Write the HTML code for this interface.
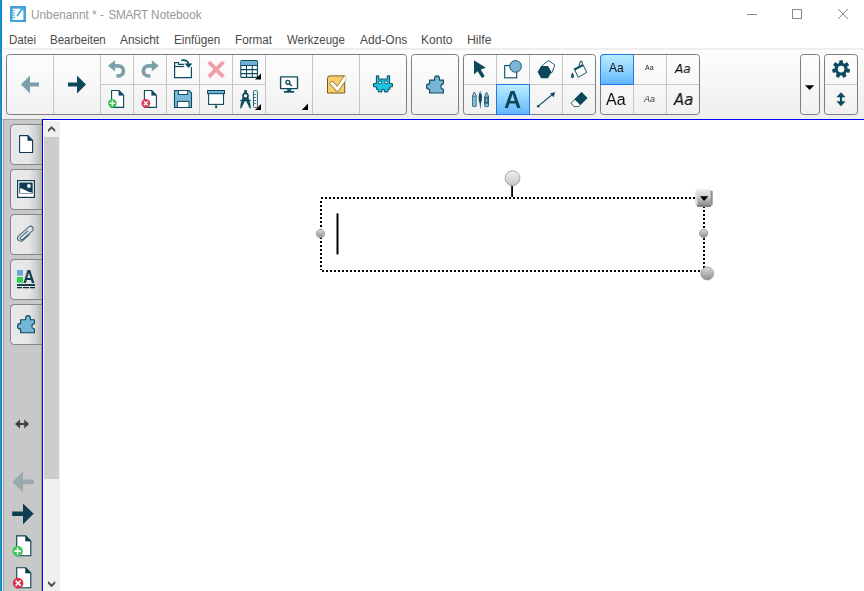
<!DOCTYPE html>
<html lang="de">
<head>
<meta charset="utf-8">
<title>Unbenannt * - SMART Notebook</title>
<style>
html,body{margin:0;padding:0;}
body{width:864px;height:591px;overflow:hidden;background:#fff;position:relative;font-family:"Liberation Sans",sans-serif;font-size:12px;color:#333;}
.abs{position:absolute;}
#lb{left:0;top:0;width:2px;height:591px;background:linear-gradient(90deg,#0099e2 0,#0099e2 50%,#1c7bb0 50%,#1c7bb0 100%);}
#title{left:30.7px;top:7px;transform-origin:0 50%;transform:scaleX(0.984);font-size:12px;color:#999;white-space:nowrap;line-height:16px;}
.mi{position:absolute;top:32px;line-height:16px;font-size:12px;color:#4a4a4a;white-space:nowrap;transform-origin:0 50%;}
#tb{left:3px;top:48px;width:861px;height:71px;background:linear-gradient(#fdfdfd,#eeeeee);border-top:2px solid #efefef;box-sizing:border-box;}
.grp{position:absolute;top:54px;height:61px;box-sizing:border-box;border:1px solid #7e7e7e;border-radius:3.5px;background:linear-gradient(#fdfdfd,#f1f1f1);overflow:hidden;}
.vd{position:absolute;top:0;width:1px;height:59px;background:#c6c6c6;}
.hd{position:absolute;top:29px;height:1px;background:#c6c6c6;}
.sel{position:absolute;box-sizing:border-box;border:1px solid #2478e3;background:linear-gradient(#b9ecff,#90d3ff 50%,#62b7fd);}
#side{left:2px;top:119px;width:40px;height:472px;background:#c8c8c8;border-top:1px solid #a2a2a2;border-left:1px solid #f2f0ef;border-right:1px solid #a0a0a0;box-sizing:border-box;box-shadow:inset 1px 0 0 #a3a3a3;}
.tab{position:absolute;left:10px;width:33px;height:41px;box-sizing:border-box;border:1px solid #858585;border-right:none;border-radius:4.5px 0 0 4.5px;background:linear-gradient(90deg,#e9e9e9 0%,#e6e6e6 55%,#cfcfcf 80%,#adadad 100%);}
#bt{left:42px;top:119px;width:822px;height:1px;background:#0000ff;}
#bl{left:42px;top:119px;width:1px;height:472px;background:#0000ff;}
#sb{left:44px;top:121px;width:16px;height:470px;background:#f0f0f0;}
#th{left:44px;top:137px;width:15px;height:342px;background:#cdcdcd;}
svg{position:absolute;overflow:visible;}
.fs{white-space:nowrap;transform-origin:0 50%;will-change:transform;}
#bigA,#sideA{will-change:transform;}
</style>
</head>
<body>
<div id="lb" class="abs"></div>
<div id="title" class="abs">Unbenannt * - <span style="margin-left:1.3px;letter-spacing:-0.35px">SMART</span> Notebook</div>
<span class="mi" style="left:9px;transform:scaleX(0.9637)">Datei</span>
<span class="mi" style="left:50.3px;transform:scaleX(0.9596)">Bearbeiten</span>
<span class="mi" style="left:120.3px;transform:scaleX(0.9960)">Ansicht</span>
<span class="mi" style="left:174.4px;transform:scaleX(0.9752)">Einfügen</span>
<span class="mi" style="left:235.4px;transform:scaleX(0.9759)">Format</span>
<span class="mi" style="left:287.2px;transform:scaleX(0.9556)">Werkzeuge</span>
<span class="mi" style="left:359.6px;transform:scaleX(0.9987)">Add-Ons</span>
<span class="mi" style="left:421.3px;transform:scaleX(1.0045)">Konto</span>
<span class="mi" style="left:467.4px;transform:scaleX(1.0202)">Hilfe</span>
<div id="tb" class="abs"></div>
<div class="grp" id="g1" style="left:6px;width:401px;">
  <div class="vd" style="left:46px"></div><div class="vd" style="left:93px"></div>
  <div class="vd" style="left:126px"></div><div class="vd" style="left:159px"></div><div class="vd" style="left:192px"></div><div class="vd" style="left:225px"></div>
  <div class="vd" style="left:258px"></div><div class="vd" style="left:305px"></div><div class="vd" style="left:352px"></div>
  <div class="hd" style="left:94px;width:164px"></div>
</div>
<div class="grp" id="g2" style="left:411px;width:48px;"></div>
<div class="grp" id="g3" style="left:463px;width:133px;">
  <div class="vd" style="left:32px"></div><div class="vd" style="left:65px"></div><div class="vd" style="left:98px"></div>
  <div class="hd" style="left:0;width:133px"></div>
</div>
<div class="grp" id="g4" style="left:600px;width:100px;">
  <div class="vd" style="left:32px"></div><div class="vd" style="left:65px"></div>
  <div class="hd" style="left:0;width:100px"></div>
</div>
<div class="sel" style="left:496px;top:84px;width:34px;height:31px"></div>
<div class="sel" style="left:600px;top:54px;width:34px;height:31px;border-radius:4px 0 0 0"></div>
<div class="grp" id="g5" style="left:800px;width:20px;"></div>
<div class="grp" id="g6" style="left:824px;width:34px;">
  <div class="hd" style="left:0;width:34px"></div>
</div>

<div class="abs t" style="left:504.4px;top:92.2px;width:15.5px;height:16.5px;font-weight:bold;font-size:23px;line-height:16.5px;color:#0b485a;" id="bigA"><span style="display:inline-block;transform-origin:0 0;transform:scaleX(1.03);position:relative;top:0px;">A</span></div>
<div class="abs fs" style="left:608.6px;top:59px;font-size:12px;line-height:18px;color:#111;" id="f1">Aa</div>
<div class="abs fs" style="left:644.8px;top:61.3px;font-size:7px;line-height:14px;color:#222;" id="f2">Aa</div>
<div class="abs fs" style="left:675.4px;top:59.6px;font-size:12.5px;line-height:18px;color:#111;font-style:italic;font-family:'DejaVu Sans',sans-serif;transform:scaleX(0.97);-webkit-text-stroke:0.12px #111;" id="f3">Aa</div>
<div class="abs fs" style="left:606px;top:89.6px;font-size:16px;line-height:20px;color:#111;" id="f4">Aa</div>
<div class="abs fs" style="left:643.8px;top:92px;font-size:9px;line-height:14px;color:#333;font-style:italic;" id="f5">Aa</div>
<div class="abs fs" style="left:674px;top:90px;font-size:16px;line-height:20px;color:#111;font-style:italic;font-family:'DejaVu Sans',sans-serif;transform:scaleX(0.93);-webkit-text-stroke:0.15px #111;" id="f6">Aa</div>
<div id="side" class="abs"></div>
<div class="tab" style="top:124px"></div>
<div class="tab" style="top:169px"></div>
<div class="tab" style="top:214px"></div>
<div class="tab" style="top:259px"></div>
<div class="tab" style="top:304px"></div>
<div class="abs" style="left:23.3px;top:269.3px;font-weight:bold;font-size:18px;line-height:16px;color:#0e3c50;transform-origin:0 0;transform:scaleX(0.9);" id="sideA">A</div>
<div id="sb" class="abs"></div>
<div id="th" class="abs"></div>
<div id="bt" class="abs"></div>
<div id="bl" class="abs"></div>

<svg id="ov" width="864" height="591" viewBox="0 0 864 591" style="left:0;top:0;">
<!-- app icon -->
<g id="appicon">
<rect x="10" y="6" width="16" height="16" fill="#41a3db"/>
<rect x="12.6" y="8.7" width="10.8" height="11.2" fill="#fff"/>
<path d="M12.6,10.6h2.2M12.6,12.9h2.2M12.6,15.2h2.2M12.6,17.5h2.2" stroke="#41a3db" stroke-width="1"/>
<path d="M17.5,15.6L21.8,9" stroke="#41a3db" stroke-width="1.7" stroke-linecap="round"/>
<path d="M21.2,8.7h2.2v2.5z" fill="#41a3db"/>
</g>
<!-- window controls -->
<path d="M747,14.5h10" stroke="#8a8a8a" stroke-width="1"/>
<rect x="792.5" y="9.5" width="9" height="9" fill="none" stroke="#8a8a8a" stroke-width="1"/>
<path d="M838,9l10,10M848,9l-10,10" stroke="#8a8a8a" stroke-width="1"/>
<!-- back / forward -->
<polygon points="21,84.5 30,75.5 30,82.4 39,82.4 39,86.6 30,86.6 30,93.5" fill="#7d9fab"/>
<polygon points="86,84.5 77,75.5 77,82.4 68,82.4 68,86.6 77,86.6 77,93.5" fill="#0b485a"/>
<!-- undo / redo -->
<polygon points="108,65.8 115,60.2 115,71.4" fill="#7d9fab"/>
<path d="M114.5,65.8H118.3A5.1,5.1 0 0 1 118.3,76H116.4" fill="none" stroke="#7d9fab" stroke-width="3.7"/>
<polygon points="158.8,65.8 151.8,60.2 151.8,71.4" fill="#7d9fab"/>
<path d="M152.3,65.8H148.5A5.1,5.1 0 0 0 148.5,76H150.4" fill="none" stroke="#7d9fab" stroke-width="3.7"/>
<!-- open/paste folder -->
<path d="M174.6,62.6H178.6V64.3H184.4V67H191.4V77.6H174.6Z" fill="#fff"/>
<path d="M174.6,62V77.6H191.4V67" fill="none" stroke="#0d4b5e" stroke-width="1.2"/>
<path d="M174.6,62.6H178.6V64.3H184.2" fill="none" stroke="#0d4b5e" stroke-width="1.2"/>
<path d="M174.6,66.5H184.2" stroke="#0d4b5e" stroke-width="1.2"/>
<path d="M181.4,60.3C185.6,59.5 188.1,61 188.5,64" fill="none" stroke="#0d4b5e" stroke-width="1.8"/>
<polygon points="184.6,63.4 192.4,63.4 188.5,68" fill="#0d4b5e"/>
<!-- delete X -->
<path d="M208.8,62L223.4,76.8M223.4,62L208.8,76.8" stroke="#f19caa" stroke-width="3.8"/>
<!-- table -->
<rect x="240.8" y="60.6" width="16.6" height="16.8" rx="1" fill="#fff" stroke="#0d4b5e" stroke-width="1.1"/>
<rect x="241.3" y="61.1" width="15.6" height="4" fill="#6fb1d6"/>
<path d="M240.8,65.4h16.6M240.8,69.6h16.6M240.8,73.6h16.6M246.5,65.4v12M252.3,65.4v12" stroke="#0d4b5e" stroke-width="1.05"/>
<polygon points="261,73.6 261,79.6 255,79.6" fill="#000"/>
<!-- compass + ruler -->
<rect x="244.2" y="90.1" width="2.7" height="3" fill="#0d4b5e"/>
<circle cx="245.5" cy="95.8" r="2.5" fill="#fff" stroke="#0d4b5e" stroke-width="1.7"/>
<polygon points="242.6,97.2 246,98.8 241.2,108.5 240.2,108.2 240.6,104" fill="#0d4b5e"/>
<polygon points="248.4,97.2 245,98.8 249.8,108.5 250.8,108.2 250.4,104" fill="#0d4b5e"/>
<path d="M240,100.4h11" stroke="#0d4b5e" stroke-width="1"/>
<path d="M245.5,98v3.4" stroke="#0d4b5e" stroke-width="1.4"/>
<rect x="253.5" y="90.7" width="3.9" height="16.6" rx="0.8" fill="#fff" stroke="#2a6478" stroke-width="1"/>
<path d="M253.5,94.4h2.6M253.5,97.5h2.6M253.5,100.6h2.6M253.5,103.7h2.6" stroke="#2a6478" stroke-width="0.9"/>
<polygon points="261,104 261,110 255,110" fill="#000"/>
<!-- add page -->
<g id="pgadd">
<path d="M111.6,90.5H118.9L123.6,95.2V107.4H111.6Z" fill="#fff" stroke="#0d4b5e" stroke-width="1.1"/>
<path d="M118.9,90.5V95.2H123.6Z" fill="#0d4b5e" stroke="#0d4b5e" stroke-width="0.6"/>
<circle cx="112.4" cy="103.3" r="4.4" fill="#3ec65a"/>
<path d="M109.6,103.3h5.6M112.4,100.5v5.6" stroke="#fff" stroke-width="1.3"/>
</g>
<g id="pgdel">
<path d="M144.4,90.5H151.7L156.4,95.2V107.4H144.4Z" fill="#fff" stroke="#0d4b5e" stroke-width="1.1"/>
<path d="M151.7,90.5V95.2H156.4Z" fill="#0d4b5e" stroke="#0d4b5e" stroke-width="0.6"/>
<circle cx="145.8" cy="103.3" r="4.4" fill="#dc3c55"/>
<path d="M143.9,101.4l3.8,3.8M147.7,101.4l-3.8,3.8" stroke="#fff" stroke-width="1.3"/>
</g>
<!-- save -->
<path d="M174.5,90.5H189L191.5,93V107.5H174.5Z" fill="#7cbadb" stroke="#0d4b5e" stroke-width="1.1"/>
<rect x="178.4" y="90.5" width="9.2" height="4" fill="#fff" stroke="#0d4b5e" stroke-width="1"/>
<rect x="177.4" y="101.4" width="11.6" height="6.1" fill="#fff" stroke="#0d4b5e" stroke-width="1"/>
<!-- screen shade -->
<rect x="208.6" y="93.4" width="14.9" height="11" fill="#fff" stroke="#0d4b5e" stroke-width="1.1"/>
<rect x="207.6" y="90.5" width="16.9" height="3.2" fill="#6fb1d6" stroke="#0d4b5e" stroke-width="1"/>
<path d="M216.1,104.6v2" stroke="#0d4b5e" stroke-width="1"/>
<polygon points="216.1,105.6 217.6,107 216.1,108.4 214.6,107" fill="#0d4b5e"/>
<!-- monitor magnifier -->
<rect x="280.6" y="76.9" width="16.9" height="11.7" rx="0.4" fill="#fff" stroke="#0d4b5e" stroke-width="1.4"/>
<rect x="287.2" y="89.2" width="3.9" height="2" fill="#0d4b5e"/>
<rect x="284" y="91" width="10.2" height="1.7" fill="#0d4b5e"/>
<circle cx="287.9" cy="82.3" r="1.9" fill="none" stroke="#0d4b5e" stroke-width="1.4"/>
<path d="M289.4,83.8l2.5,2.2" stroke="#0d4b5e" stroke-width="1.4"/>
<polygon points="308,103.6 308,110 301.8,110" fill="#000"/>
<!-- response checkbox -->
<clipPath id="cbclip"><rect x="326" y="75.4" width="19.3" height="19"/></clipPath>
<path d="M330,75.9H344.7V93H327.5V78.4A2.5,2.5 0 0 1 330,75.9Z" fill="#f9cf6e" stroke="#7a5a16" stroke-width="1"/>
<g clip-path="url(#cbclip)" fill="none" stroke-linecap="round" stroke-linejoin="round">
<path d="M331.9,83.3L337.4,89.2L346.4,76.2" stroke="#8a6a22" stroke-width="4.5"/>
<path d="M331.9,83.3L337.4,89.2L346.4,76.2" stroke="#fff" stroke-width="3.1"/>
</g>
<!-- invader -->
<path d="M376.4,75.8h2.3v3.3h8.6v-3.3h2.3v7.8h2.8v3.2h-2.6v2.6h-1.9v2.5h-3.5v-2.5h-2.4v2.5h-3.7v-2.5h-1.9v-2.6h-2.9v-3.2h2.9z" fill="#1fc3e3" stroke="#0d4b5e" stroke-width="1" stroke-linejoin="miter"/>
<path d="M378.9,79.9h8.2" stroke="#1593b4" stroke-width="1.2"/>
<rect x="378.8" y="81.2" width="2.5" height="2.5" fill="#fff" stroke="#0d4b5e" stroke-width="0.7"/>
<rect x="384.9" y="81.2" width="2.5" height="2.5" fill="#fff" stroke="#0d4b5e" stroke-width="0.7"/>
<!-- puzzle (toolbar) -->
<path id="pz" transform="translate(426,75.5)" d="M3.6,4.6H8.6V2.8A2.4,2.4 0 0 1 13.4,2.8V4.6H17.4V8.4H17A2.7,2.7 0 0 0 17,13.7H17.4V17.5H3.6V13.7H2.8A2.3,2.65 0 0 1 2.8,8.4H3.6Z" fill="#78b5d3" stroke="#0d4b5e" stroke-width="1.1" stroke-linejoin="round"/>

<!-- GROUP3 tools -->
<polygon points="474,60.3 474,74.5 477.6,71.2 482,78 484.7,76.3 480.7,69.6 485.9,67.7" fill="#0b485a"/>
<rect x="504.7" y="65.6" width="12" height="12.2" fill="#fff" stroke="#0d4b5e" stroke-width="1.1"/>
<circle cx="515.5" cy="66.4" r="5.85" fill="#7ab7d6" stroke="#0d4b5e" stroke-width="0.9"/>
<!-- pens -->
<g stroke="#1c5a70" stroke-width="0.8" stroke-linejoin="round">
<path d="M472.5,96L474.35,92.2L476.2,96V106.2Q474.35,107.2 472.5,106.2Z" fill="#82bfdf"/>
<path d="M472.5,96L474.35,92.2L476.2,96Z" fill="#fff"/>
<path d="M484.7,96L486.6,92.2L488.5,96V106.2Q486.6,107.2 484.7,106.2Z" fill="#82bfdf"/>
<rect x="484.7" y="97.2" width="3.8" height="6" fill="#2f6f88"/>
</g>
<rect x="486.1" y="98.6" width="1" height="3.2" fill="#9fd0ea"/>
<path d="M480.3,90.4L481.6,94C482.6,98 481.6,101.5 480.9,103.5L480.5,108.2H480.1L479.7,103.5C479,101.5 478,98 479,94Z" fill="#0d4b5e"/>
<path d="M480.3,90.6L481.3,93.6L479.4,93.6Z" fill="#9db7c2"/>
<!-- polygons -->
<polygon points="548.5,60.6 554.8,64.9 552,72.6 544,72 542.2,65.4" fill="#fff" stroke="#0d4b5e" stroke-width="0.9"/>
<polygon points="537.6,72.1 541.1,66 548,66 551.5,72.1 548,78.2 541.1,78.2" fill="#0b485a"/>
<!-- bucket -->
<g fill="none" stroke="#0d4b5e" stroke-linejoin="round">
<path d="M574.6,69.8L583.2,65.2L586.7,72.4L578.3,77.3Z" fill="#fbfbfb" stroke-width="0.95"/>
<path d="M574.1,69.7L583.3,64.8" stroke-width="2"/>
<path d="M578.8,66.6L580.5,61L582,61.2L582.3,64.6" stroke-width="1"/>
</g>
<path d="M572.5,72.6Q574.6,76 573.8,77.3A1.6,1.6 0 0 1 571.2,77.3Q570.4,76 572.5,72.6Z" fill="#0d4b5e"/>
<circle cx="572.5" cy="76.4" r="0.6" fill="#6fa3b8"/>
<!-- line arrow -->
<path d="M538.2,106.2L553,94" stroke="#0d4b5e" stroke-width="1.1"/>
<circle cx="538.2" cy="106.2" r="1.3" fill="#0d4b5e"/>
<polygon points="555.2,92.2 553.6,97.2 550.2,93.2" fill="#0d4b5e"/>
<!-- eraser -->
<path d="M581.6,92.3L587.2,98L578.6,106.6H574L571.2,103.2Z" fill="#fff" stroke="#0d4b5e" stroke-width="0.9" stroke-linejoin="round"/>
<path d="M581.6,92.3L587.2,98L580.2,105L574.4,99.2Z" fill="#0b485a"/>
<!-- GROUP 5 dropdown -->
<polygon points="805,85.2 814.2,85.2 809.6,90" fill="#000"/>
<!-- gear -->
<g transform="translate(841.1,69.1)" fill="#0d4b5e">
<circle r="4.9" fill="none" stroke="#0d4b5e" stroke-width="3.1" />
<g id="teeth">
<rect x="-1.9" y="-8.9" width="3.8" height="3.6" rx="0.7"/>
<rect x="-1.9" y="-8.9" width="3.8" height="3.6" rx="0.7" transform="rotate(51.43)"/>
<rect x="-1.9" y="-8.9" width="3.8" height="3.6" rx="0.7" transform="rotate(102.86)"/>
<rect x="-1.9" y="-8.9" width="3.8" height="3.6" rx="0.7" transform="rotate(154.29)"/>
<rect x="-1.9" y="-8.9" width="3.8" height="3.6" rx="0.7" transform="rotate(205.71)"/>
<rect x="-1.9" y="-8.9" width="3.8" height="3.6" rx="0.7" transform="rotate(257.14)"/>
<rect x="-1.9" y="-8.9" width="3.8" height="3.6" rx="0.7" transform="rotate(308.57)"/>
</g>
</g>
<!-- up down arrow -->
<polygon points="841,92.2 845.6,97.2 836.4,97.2" fill="#0d4b5e"/>
<polygon points="841,106.2 845.6,101.2 836.4,101.2" fill="#0d4b5e"/>
<rect x="839.9" y="96.5" width="2.2" height="5.5" fill="#0d4b5e"/>

<!-- SIDEBAR icons -->
<defs>
<linearGradient id="hg1" x1="0" y1="0" x2="0" y2="1"><stop offset="0" stop-color="#f2f2f2"/><stop offset="1" stop-color="#c4c4c4"/></linearGradient>
<linearGradient id="hg2" x1="0" y1="0" x2="0" y2="1"><stop offset="0" stop-color="#dcdcdc"/><stop offset="1" stop-color="#8e8e8e"/></linearGradient>
<linearGradient id="hg3" x1="0" y1="0" x2="0" y2="1"><stop offset="0" stop-color="#e2e2e2"/><stop offset="0.4" stop-color="#cfcfcf"/><stop offset="1" stop-color="#8c8c8c"/></linearGradient>
</defs>
<!-- page -->
<path d="M19.6,135.6H27.8L32.6,140.4V152.5H19.6Z" fill="#fff" stroke="#0e3c50" stroke-width="1.1"/>
<path d="M27.8,135.6V140.4H32.6Z" fill="#0e3c50" stroke="#0e3c50" stroke-width="0.6"/>
<!-- image -->
<rect x="17.6" y="180.6" width="16.8" height="16.8" fill="#fff" stroke="#0e3c50" stroke-width="1.2"/>
<rect x="19.3" y="182.4" width="13.4" height="11.2" rx="0.6" fill="#0e3c50"/>
<circle cx="28.9" cy="186" r="1.9" fill="#fff"/>
<path d="M20.1,188.2C24,188.6 27,192 32,192.4V192.9H20.1Z" fill="#fff"/>
<!-- paperclip -->
<g transform="translate(25.4,233.7) rotate(-41) scale(0.93)" fill="none" stroke="#456a7a" stroke-width="1.15">
<path d="M4.5,-0.6H-6.2A1.6,1.6 0 0 0 -6.2,2.6H7.6A2.8,2.8 0 0 0 7.6,-3H-7A3.3,3.3 0 0 0 -7,3.6H3" />
</g>
<!-- properties A -->
<rect x="17" y="270" width="6" height="5.7" fill="#6aaad2"/>
<rect x="17" y="277" width="6" height="5.8" fill="#2fcf4f"/>
<rect x="17" y="284.1" width="18" height="1.8" fill="#06283a"/>
<path d="M17,287.6h5M23,287.6h6M30,287.6h5" stroke="#06283a" stroke-width="1.1"/>
<!-- puzzle side -->
<path transform="translate(17,315.2)" d="M3.6,4.6H8.6V2.8A2.4,2.4 0 0 1 13.4,2.8V4.6H17.4V8.4H17A2.7,2.7 0 0 0 17,13.7H17.4V17.5H3.6V13.7H2.8A2.3,2.65 0 0 1 2.8,8.4H3.6Z" fill="#74b6d6" stroke="#0d4b5e" stroke-width="1.1" stroke-linejoin="round"/>
<!-- resize double arrow -->
<polygon points="15,424 20,419.6 20,428.4" fill="#404040"/>
<polygon points="29.2,424 24.2,419.6 24.2,428.4" fill="#404040"/>
<rect x="19" y="423" width="6" height="2" fill="#404040"/>
<!-- nav arrows -->
<polygon points="12.4,482 23,471.6 23,479.6 33.8,479.6 33.8,484.2 23,484.2 23,492.2" fill="#9aa9ae"/>
<polygon points="33.6,513.8 23,503.4 23,511.5 12.2,511.5 12.2,516.1 23,516.1 23,524.2" fill="#0e3c50"/>
<!-- add page side -->
<path d="M16.7,535.9H25.6L30.8,541.1V555.8H16.7Z" fill="#fff" stroke="#0e3c50" stroke-width="1.1"/>
<path d="M25.6,535.9V541.1H30.8Z" fill="#0e3c50" stroke="#0e3c50" stroke-width="0.6"/>
<circle cx="17.6" cy="551.1" r="5.3" fill="#3ec65a"/>
<path d="M14.2,551.1h6.8M17.6,547.7v6.8" stroke="#fff" stroke-width="1.6"/>
<!-- del page side -->
<path d="M16.7,567.8H25.6L30.8,573V587.7H16.7Z" fill="#fff" stroke="#0e3c50" stroke-width="1.1"/>
<path d="M25.6,567.8V573H30.8Z" fill="#0e3c50" stroke="#0e3c50" stroke-width="0.6"/>
<circle cx="18.1" cy="583.1" r="5.3" fill="#dc2f4c"/>
<path d="M15.6,580.6l5,5M20.6,580.6l-5,5" stroke="#fff" stroke-width="1.6"/>
<!-- scrollbar arrows -->
<polygon points="48,129.4 51.6,125.9 55.2,129.4 55.2,132.2 51.6,128.8 48,132.2" fill="#505050"/>
<polygon points="48,583.7 51.6,587.2 55.2,583.7 55.2,580.9 51.6,584.3 48,580.9" fill="#505050"/>
<!-- TEXT BOX -->
<g stroke="#000" stroke-width="2" stroke-dasharray="2,2" fill="none">
<path d="M321,198H705"/>
<path d="M322,271H705"/>
<path d="M321,201V270"/>
<path d="M704,202V270"/>
</g>
<rect x="511.2" y="186" width="1.8" height="11" fill="#000"/>
<circle cx="512.5" cy="178.2" r="7.4" fill="url(#hg1)" stroke="#a8a8a8" stroke-width="1"/>
<circle cx="320.5" cy="233.6" r="4.2" fill="url(#hg2)" stroke="#9a9a9a" stroke-width="0.8"/>
<circle cx="703.6" cy="233.4" r="4.2" fill="url(#hg2)" stroke="#9a9a9a" stroke-width="0.8"/>
<circle cx="707.2" cy="273.5" r="6.5" fill="url(#hg2)" stroke="#9a9a9a" stroke-width="0.8"/>
<g id="ddbtn">
<rect x="696.8" y="189.3" width="14.2" height="2.6" rx="0.8" fill="#e9e9e9"/>
<rect x="695.2" y="190.8" width="2.6" height="14.6" rx="0.8" fill="#dedede"/>
<rect x="710.2" y="190.8" width="2.5" height="14.6" rx="0.8" fill="#8e8e8e"/>
<rect x="696.8" y="204.4" width="14.2" height="2.5" rx="0.8" fill="#808080"/>
<rect x="697.4" y="191.4" width="13.1" height="13.4" fill="url(#hg3)"/>
<polygon points="700,196.2 708.3,196.2 704.15,201" fill="#000"/>
</g>
<rect x="336.5" y="213.2" width="2" height="41.4" rx="0.9" fill="#000"/>
</svg>
</body>
</html>
